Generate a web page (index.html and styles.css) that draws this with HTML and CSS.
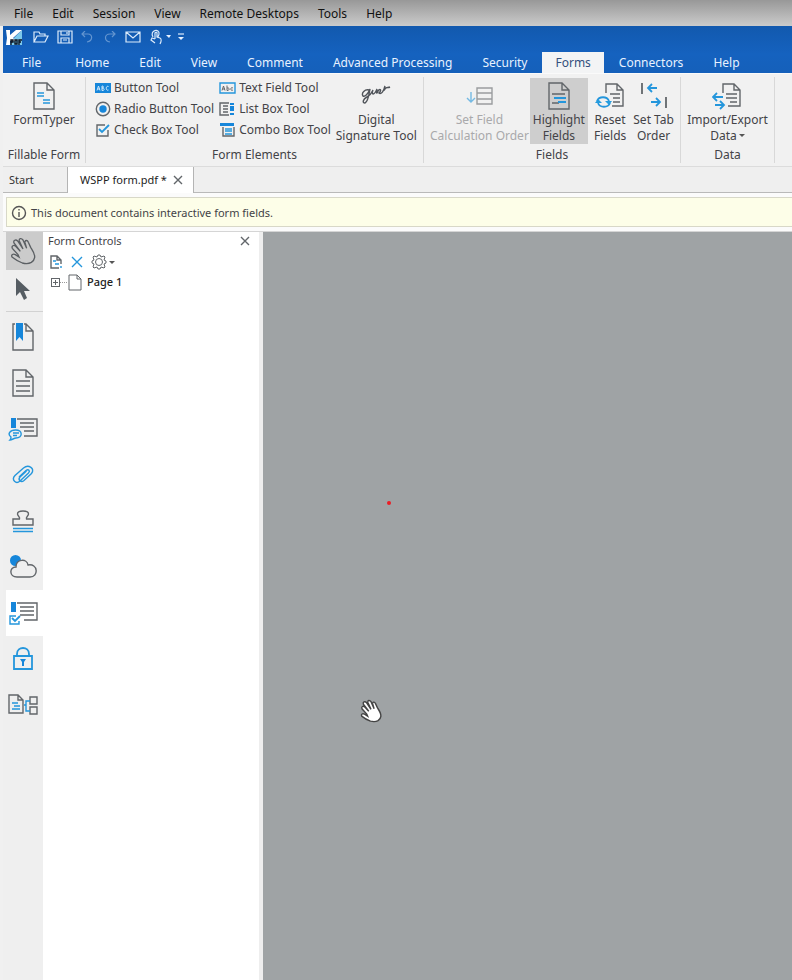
FILE: index.html
```html
<!DOCTYPE html>
<html lang="en">
<head>
<meta charset="utf-8">
<title>WSPP form.pdf</title>
<link rel="stylesheet" href="styles.css">
</head>
<body>
<svg class="defs" width="0" height="0" aria-hidden="true">
  <symbol id="hand" viewBox="-3 -3 78 84">
    <path d="M3 57C0 51 6 46 13 50L24 57L21 50L4 31C1 24 8 19 14 25L28 40L9 15C6 7 14 3 20 9L36 33L25 9C23 1 31-1 36 6L47 31L42 14C41 6 49 5 52 13L59 28C66 39 72 47 71 58C70 66 67 69 61 73C51 79 42 77 34 75C21 70 13 65 3 57Z"/>
  </symbol>
  <symbol id="page" viewBox="0 0 22 28">
    <path d="M1 1H14L21 8V27H1ZM14 1V8H21"/>
  </symbol>
</svg>

<nav class="menubar" aria-label="Session menu">
  <button>File</button><button>Edit</button><button>Session</button><button>View</button><button>Remote Desktops</button><button>Tools</button><button>Help</button>
</nav>

<div class="app">
  <header class="titlebar">
    <div class="quick">
      <svg class="logo" width="18" height="17" viewBox="0 0 18 17"><path d="M9 9L17 1V16H4Z" fill="#7cc8ea" stroke="none"/><path d="M1 1H5V6L11 1H17L8 9L11 12H5V16H1L2 9Z" fill="#fff" stroke="none"/><path d="M6 16V11H8V13H6M10 11V15H12V11ZM14 16V11H17M14 13H16" fill="none" stroke="#0b1320" stroke-width="1.4"/></svg>
      <button class="open" aria-label="Open"><svg width="16" height="14" viewBox="0 0 16 14"><path d="M1 12V2H6L7 4H12V6M1 12L4 6H15L12 12Z"/></svg></button>
      <button class="save" aria-label="Save"><svg width="16" height="14" viewBox="0 0 16 14"><path d="M1 1H15V13H1ZM4 1V5H12V1M4 13V8H12V13M10 2V4M6 10H10"/></svg></button>
      <button class="undo dim" aria-label="Undo"><svg width="12" height="12" viewBox="0 0 12 12"><path d="M1 3H7C12 3 12 10 6 11M4 0L1 3L4 6"/></svg></button>
      <button class="redo dim" aria-label="Redo"><svg width="12" height="12" viewBox="0 0 12 12"><path d="M11 3H6C0 3 0 10 6 11M8 0L11 3L8 6"/></svg></button>
      <button class="mail" aria-label="Mail"><svg width="16" height="12" viewBox="0 0 16 12"><path d="M1 1H15V11H1ZM1 1L8 7L15 1"/></svg></button>
      <button class="touch" aria-label="Touch mode"><svg width="22" height="16" viewBox="0 0 22 16"><path d="M3 8C-1 1 10-1 9 5C9 6 8 7 8 8M5 10V4C6 3 7 3 7 4V8L10 9C12 10 11 13 10 15M5 10L2 9L1 11L5 14"/><path class="solid" d="M16 6H21L19 9Z"/></svg></button>
      <button class="more" aria-label="Customize"><svg width="8" height="10" viewBox="0 0 8 10"><path d="M1 2H7"/><path class="solid" d="M1 5H7L4 8Z"/></svg></button>
    </div>
    <nav class="tabs" aria-label="Ribbon tabs">
      <button class="file">File</button><button>Home</button><button>Edit</button><button>View</button><button>Comment</button><button>Advanced Processing</button><button>Security</button><button class="active">Forms</button><button>Connectors</button><button>Help</button>
    </nav>
  </header>

  <section class="ribbon" aria-label="Forms">
    <div class="group g-fill">
      <div class="tools">
        <button class="big"><svg width="22" height="28" viewBox="0 0 22 28"><use href="#page"/><path class="blue" d="M4 11H11M4 14H11M10 18H17M10 21H17"/></svg><span>FormTyper</span></button>
      </div>
      <h2>Fillable Form</h2>
    </div>
    <div class="group g-elements">
      <div class="tools">
        <div class="stack">
          <button><svg width="16" height="14" viewBox="0 0 16 14"><path fill="#1686da" stroke="none" d="M0 2H16V12H0Z"/><path class="fine" d="M2 9.500L3.500 5L5 9.500M3 8H5M7 5V9.500C10 9.500 10 7 7 7C9 7 9 5 7 5M13.500 5.500C10.500 4 10.500 10.500 13.500 9" stroke="#cfe9fc"/></svg>Button Tool</button>
          <button><svg width="16" height="16" viewBox="0 0 16 16"><circle cx="8" cy="8" r="6.700"/><circle cx="8" cy="8" r="3.700" fill="#1686da" stroke="none"/></svg>Radio Button Tool</button>
          <button><svg width="16" height="14" viewBox="0 0 16 14"><path d="M10 2H2V13H13V7"/><path class="blue two" d="M4 6L7 9L14 2"/></svg>Check Box Tool</button>
        </div>
        <div class="stack">
          <button><svg width="17" height="14" viewBox="0 0 17 14"><path class="blue" d="M1 2H16V12H1Z"/><path class="fine" d="M3 9.500L4.500 5L6 9.500M4 8H6M8 4.500V9.500C11 9.500 11 6.500 8 7M14 7C11 5.500 11 10.500 14 9"/></svg>Text Field Tool</button>
          <button><svg width="17" height="14" viewBox="0 0 17 14"><path d="M10 1H1V13H10M4 4H9M4 7H9M4 10H9"/><path fill="#1686da" stroke="none" d="M11 1H15V3H11ZM11 4H15V9H11ZM11 11H15V13H11Z"/></svg>List Box Tool</button>
          <button><svg width="17" height="14" viewBox="0 0 17 14"><path fill="#1686da" stroke="none" d="M1 0H15V3H1Z"/><path d="M4 4V13H15V4"/><path class="blue" d="M6 6H13M6 8H13M6 11H13"/></svg>Combo Box Tool</button>
        </div>
        <button class="big sign"><svg width="30" height="28" viewBox="0 0 30 28"><path class="ink" d="M8 8C4 7 0 11 2 14C4 15 7 12 9 7C8 13 7 20 4 21C1 21 2 17 6 15C10 13 11 10 12 8C10 13 13 14 16 7C15 12 16 12 17 9C19 6 21 8 18 11C20 13 23 9 24 4C22 9 23 9 24 7C25 5 27 6 29 5"/></svg><span>Digital<br>Signature Tool</span></button>
      </div>
      <h2>Form Elements</h2>
    </div>
    <div class="group g-fields">
      <div class="tools">
        <button class="big calc" disabled><svg width="28" height="28" viewBox="0 0 28 28"><path d="M12 6H27V11H12ZM12 11V17H27V11M12 17V22H27V17"/><path class="blue" d="M6 10V20M2 16L6 20L10 16"/></svg><span>Set Field<br>Calculation Order</span></button>
        <button class="big on" aria-pressed="true"><svg width="22" height="28" viewBox="0 0 22 28"><use href="#page"/><path d="M4 12H17M4 21H11"/><path class="blue two" d="M6 16H18M10 20H18"/></svg><span>Highlight<br>Fields</span></button>
        <button class="big reset"><svg width="30" height="28" viewBox="0 0 30 28"><path d="M11 11V2H22L28 8V24H17M22 2V8H28M15 12H25M18 16H25M18 20H25"/><path class="blue two" d="M2 19C4 14 12 14 14 19M15 21C13 26 5 26 3 21"/><path fill="#249cdf" stroke="none" d="M10 19H17L14 23ZM0 21H7L3 17Z"/></svg><span>Reset<br>Fields</span></button>
        <button class="big order"><svg width="28" height="28" viewBox="0 0 28 28"><path class="two" d="M2 1V12M26 15V26"/><path class="blue two" d="M17 6H8M12 2L8 6L12 10M11 20H20M16 16L20 20L16 24"/></svg><span>Set Tab<br>Order</span></button>
      </div>
      <h2>Fields</h2>
    </div>
    <div class="group g-data">
      <div class="tools">
        <button class="big"><svg width="30" height="28" viewBox="0 0 30 28"><path d="M11 11V2H22L28 8V24H16M22 2V8H28M14 12H25M14 16H25M18 20H25"/><path class="blue two" d="M11 15H1M5 11L1 15L5 19M3 23H12M8 19L12 23L8 27"/></svg><span>Import/Export<br>Data<i class="caret"></i></span></button>
      </div>
      <h2>Data</h2>
    </div>
  </section>

  <nav class="doctabs" aria-label="Documents">
    <button class="start">Start</button>
    <div class="doc"><button>WSPP form.pdf *</button><button class="close" aria-label="Close document"><svg width="10" height="10" viewBox="0 0 10 10"><path d="M1 1L9 9M9 1L1 9"/></svg></button></div>
  </nav>

  <div class="notice"><p><svg width="16" height="16" viewBox="0 0 16 16"><circle cx="8" cy="8" r="6.500"/><path d="M8 4V5.500M8 7V12"/></svg>This document contains interactive form fields.</p></div>

  <div class="body">
    <nav class="rail" aria-label="Panels">
      <button class="tool selected" aria-label="Hand"><svg width="26" height="28" class="handicon"><use href="#hand"/></svg></button>
      <button class="tool" aria-label="Select"><svg width="16" height="24" viewBox="0 0 16 24"><path d="M1 1V19L5 15L9 23L12 21L9 14H15Z" fill="#565d63" stroke="none"/></svg></button>
      <hr>
      <button aria-label="Bookmarks"><svg width="22" height="28" viewBox="0 0 22 28"><path d="M3 1H1V27H21V8L14 1H12M14 1V8H21"/><path fill="#1686da" stroke="none" d="M4 0H11V18L7.500 14L4 18Z"/></svg></button>
      <button aria-label="Pages"><svg width="22" height="28" viewBox="0 0 22 28"><use href="#page"/><path d="M4 12H18M4 17H18M4 22H18"/></svg></button>
      <button aria-label="Comments"><svg width="30" height="26" viewBox="0 0 30 26"><path d="M9 3H29V20H16M12 7H26M12 11H26M16 15H26"/><path fill="#1686da" stroke="none" d="M3 2H8V12H3Z"/><path class="blue" d="M3 21C-1 18 2 14 7.500 14C15 14 15 22 8 22C6 22 4 24 2 24C3 23 3 22 3 21ZM5 17H11M5 19.500H9"/></svg></button>
      <button aria-label="Attachments"><svg width="24" height="24" viewBox="0 0 24 24"><path class="blue" d="M8 14L15 7.500C17.500 5.500 19.500 8 17.500 10L9 18C5 21.500 0 17 4 12.500L12.500 5C17.500 1 24.500 5.500 20.500 10.500L13 17.500C10 20 6.500 17 9 14L15.500 8"/></svg></button>
      <button aria-label="Stamps"><svg width="24" height="24" viewBox="0 0 24 24"><path d="M2 16V10H8.500C9.500 8 6.500 7 6.500 5C6.500 1 17.500 1 17.500 5C17.500 7 14.500 8 15.500 10H22V16Z"/><path class="blue" d="M2 19.500H22M2 22.500H22"/></svg></button>
      <button aria-label="Cloud"><svg width="28" height="26" viewBox="0 0 28 26"><circle cx="6.500" cy="6.500" r="5.500" fill="#1686da" stroke="none"/><path class="cloud" d="M8 23C0 23 0 13 7 13C7 5 18 4 19 11C29 9 30 23 21 23Z"/></svg></button>
      <button class="current" aria-label="Form controls"><svg width="30" height="26" viewBox="0 0 30 26"><path d="M9 3H29V20H16M12 7H26M12 11H26M12 15H26"/><path fill="#1686da" stroke="none" d="M3 2H8V12H3Z"/><path class="blue" d="M8 16H2V24H11V21"/><path class="blue two" d="M4 18L7 21L12 16"/></svg></button>
      <button aria-label="Security"><svg width="22" height="24" viewBox="0 0 22 24"><path class="blue two" d="M2 9H20V22H2ZM5 9V7C5-1 17-1 17 7V9"/><path fill="#1686da" stroke="none" d="M8 12H14L12 15V19H10V15Z"/></svg></button>
      <button aria-label="Structure"><svg width="30" height="24" viewBox="0 0 30 24"><path d="M1 2H10L15 7V20H1ZM10 2V7H15M22 4H29V11H22ZM22 14H29V21H22Z"/><path class="blue" d="M4 10H10M6 13H12M4 16H12M16 12H18M22 8H18V18H22"/></svg></button>
    </nav>
    <aside class="panel">
      <header><h1>Form Controls</h1><button aria-label="Close panel"><svg width="10" height="10" viewBox="0 0 10 10"><path d="M1 1L9 9M9 1L1 9"/></svg></button></header>
      <div class="paneltools">
        <button aria-label="Properties"><svg width="13" height="14" viewBox="0 0 13 14"><path d="M9 13H1V1H7L11 5V9M7 1V5H11"/><path class="blue" d="M3 6H6M5 9H9M11 11V13"/></svg></button>
        <button aria-label="Delete"><svg width="12" height="12" viewBox="0 0 12 12"><path class="blue" d="M1 1L11 11M11 1L1 11"/></svg></button>
        <button aria-label="Options"><svg width="25" height="16" viewBox="0 0 25 16"><g class="fine"><circle cx="8" cy="8" r="3.500"/><path d="M6 3L7 1H9L10 3L13 2L14 3L13 6L15 7V9L13 10L14 13L13 14L10 13L9 15H7L6 13L3 14L2 13L3 10L1 9V7L3 6L2 3L3 2Z"/></g><path fill="#555" stroke="none" d="M18 7H24L21 10Z"/></svg></button>
      </div>
      <ul class="tree"><li><button aria-label="Expand"><svg class="fine" width="17" height="9" viewBox="0 0 17 9" shape-rendering="crispEdges"><path d="M.5.5H8.5V8.5H.5ZM2 4.5H7M4.5 2V7"/><path d="M9 4.5H17" stroke-dasharray="1 1" stroke="#999"/></svg></button><svg class="fine" width="14" height="17" viewBox="0 0 14 17"><path d="M1 1H9L13 5V16H1ZM9 1V5H13"/></svg>Page 1</li></ul>
    </aside>
    <main class="canvas">
      <span class="dot"></span>
      <svg class="cursor" width="22" height="26"><use href="#hand"/></svg>
    </main>
  </div>
</div>
</body>
</html>
```

FILE: styles.css
```css
* { box-sizing: border-box; }
html, body { height: 100%; }
body {
  margin: 0;
  display: flex;
  flex-direction: column;
  background: #f0f0f0;
  color: #434347;
  font: 11px/14px "Noto Sans", "Open Sans", sans-serif;
}
button {
  margin: 0;
  padding: 0;
  border: 0;
  background: none;
  color: inherit;
  font: inherit;
  white-space: nowrap;
}
h1, h2, p, ul { margin: 0; padding: 0; font: inherit; list-style: none; }
svg { flex: none; fill: none; stroke: #62666a; stroke-width: 1.4; }
.defs { position: absolute; }
.blue { stroke: #2496dc; }
.two { stroke-width: 1.8; }
.fine { stroke-width: 1; }

.menubar {
  display: flex;
  gap: 19px;
  height: 26px;
  flex: none;
  padding: 2px 14px 0;
  color: #111;
  font-size: 12px;
  background: linear-gradient(#989898, #cbcbcb);
}
.app { flex: 1; min-height: 0; display: flex; flex-direction: column; margin-left: 3px; }

.titlebar { flex: none; color: #e8f2ff; background: linear-gradient(#1259ae, #1562bf 60%, #1560ba); }
.quick { display: flex; align-items: center; height: 26px; padding: 0 2px 4px 2px; }
.quick svg { display: block; stroke: #dcebfb; stroke-width: 1.2; }
.quick .solid { fill: #e8f2ff; stroke: none; }
.quick .dim { opacity: .4; }
.logo { margin-right: 10px; }
.open, .save { margin-right: 8px; }
.undo { margin-right: 11px; }
.redo { margin-right: 9px; }
.mail { margin-right: 9px; }
.touch { margin-right: 5px; }
.tabs { display: flex; height: 21px; font-size: 12px; }
.tabs button { padding: 0 15px; }
.tabs .file { padding: 0 19px; }
.tabs .active { padding: 0 13px; background: #f3f4f5; color: #34507c; }

.ribbon { flex: none; display: flex; height: 94px; border-top: 1px solid #fafafa; border-bottom: 1px solid #dcdcdc; background: #f1f1f1; font-size: 12px; line-height: 16px; }
.group { display: flex; flex-direction: column; margin: 3px 0; border-right: 1px solid #d8d8d8; }
.group h2 { text-align: center; white-space: nowrap; }
.tools { display: flex; height: 68px; margin-bottom: 2px; }
.g-fill { width: 83px; }
.g-elements { width: 338px; }
.g-fields { width: 257px; }
.g-data { width: 94px; }
.g-fill .tools, .g-data .tools { justify-content: center; }
.g-elements .tools { padding-left: 9px; }
.big { display: flex; flex-direction: column; align-items: center; height: 66px; margin-top: 1px; padding: 4px 2px 0; }
.big svg { margin-bottom: 2px; }
.big:disabled { color: #a9a9ab; }
.big:disabled svg { opacity: .6; }
.sign { padding: 4px 0 0; }
.on { padding: 4px 3px 0; background: #cecece; }
.calc { margin-left: 5px; padding: 4px 1px 0; }
.reset { margin-left: 4px; }
.order { margin-left: 3px; }
.ink { stroke: #50545a; }
.caret { display: inline-block; margin: 0 0 3px 2px; border: 3px solid transparent; border-top-color: #555; border-bottom: 0; }
.stack { display: flex; flex-direction: column; margin-right: 5px; }
.stack button { display: flex; align-items: center; gap: 3px; height: 21px; }

.doctabs { flex: none; display: flex; height: 26px; color: #333; background: #efefef; border-bottom: 1px solid #b9b9b9; }
.start { width: 64px; padding-left: 6px; text-align: left; }
.doc { display: flex; align-items: center; gap: 6px; margin-bottom: -1px; padding: 0 10px 0 12px; border: solid #b4b4b4; border-width: 0 1px; background: #fff; color: #222; }
.doc svg, .panel header svg { display: block; }

.notice { flex: none; padding: 4px 0 4px 3px; background: #fbfbfb; border-bottom: 1px solid #d5d5d5; }
.notice p { display: flex; align-items: center; gap: 4px; height: 30px; padding: 2px 0 0 4px; border: 1px solid #d8d8c8; border-right: 0; background: #fdfee8; }
.notice svg { stroke: #555; }

.body { flex: 1; min-height: 0; display: flex; }
.rail { flex: none; width: 40px; padding-left: 3px; display: flex; flex-direction: column; background: #efefef; }
.rail button { flex: none; display: flex; align-items: center; justify-content: center; height: 46px; padding-right: 4px; }
.rail .tool { height: 38px; }
.rail .selected { background: #cbcbcb; }
.rail hr { width: 100%; margin: 3px 0 2px; border: 0; border-top: 1px solid #d2d2d2; }
.rail .current { background: #fff; }
.handicon { stroke: #5b5f63; stroke-width: 4; }
.cloud { fill: #efefef; }
.panel { flex: none; width: 220px; border-right: 4px solid #eee; background: #fff; }
.panel header { display: flex; justify-content: space-between; align-items: center; height: 20px; padding: 0 9px 2px 5px; }
.paneltools { display: flex; align-items: center; gap: 8px; height: 20px; padding-left: 7px; }
.paneltools svg, .tree svg { display: block; }
.tree li { display: flex; align-items: center; height: 20px; padding-left: 8px; color: #222; font-weight: 500; }
.tree li > svg { margin-right: 5px; }
.canvas { position: relative; flex: 1; background: #9fa3a5; }
.dot { position: absolute; left: 124px; top: 269px; width: 4px; height: 4px; border-radius: 50%; background: #ec1c24; }
.cursor { position: absolute; left: 97px; top: 466px; fill: #fff; stroke: #444; stroke-width: 5; }
```
